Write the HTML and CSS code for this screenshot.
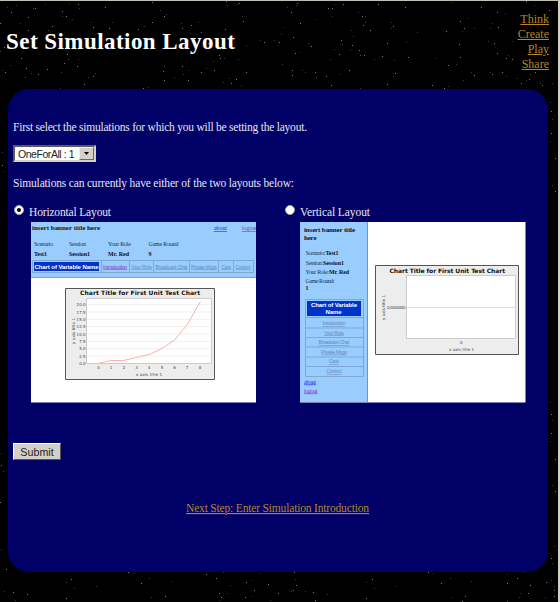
FILE: index.html
```html
<!DOCTYPE html>
<html lang="en">
<head>
<meta charset="utf-8">
<title>Set Simulation Layout</title>
<link rel="stylesheet" href="styles.css">
</head>
<body>
<svg class="stars" width="557" height="602" viewBox="0 0 557 602" shape-rendering="crispEdges" aria-hidden="true">
<path id="bright" d=""/>
<path id="dim" d=""/>
</svg>
<header class="top">
<h1><span>Set Simulation Layout</span></h1>
<nav><a href="#">Think</a><a href="#">Create</a><a href="#">Play</a><a href="#">Share</a></nav>
</header>
<main class="panel">
<p class="first"><svg class="line" width="300" height="20"><text x="0" y="14" textLength="294">First select the simulations for which you will be setting the layout.</text></svg></p>
<button class="select" type="button"><svg class="value" width="60" height="13"><text x="0" y="10.500" textLength="56.500">OneForAll : 1</text></svg><i class="drop"><svg width="5" height="3"><path d="M0 0H5L2.5 3Z"/></svg></i></button>
<p class="second"><svg class="line" width="300" height="20"><text x="0" y="14" textLength="281">Simulations can currently have either of the two layouts below:</text></svg></p>
<div class="options">
<section class="option horizontal">
<label><i class="radio checked"></i><svg class="line" width="90" height="16"><text x="0" y="12" textLength="82">Horizontal Layout</text></svg></label>
<svg class="preview" width="226" height="181" viewBox="30 222 226 181">
<path fill="#fff" d="M31 222H256V402H31Z"/><path fill="#9cf" d="M31 222H256V277H31Z"/>
<path stroke="#7aa3cc" d="M31 277.5H256" fill="none"/>
<g class="serif"><text class="b" x="32" y="230" font-size="7" textLength="68">insert banner title here</text>
<text class="blue" x="214" y="230" textLength="13">about</text><text class="purple" x="242" y="230" textLength="15">logout</text>
<text x="34" y="246" textLength="19">Scenario</text><text x="69" y="246" textLength="17">Session</text><text x="108" y="246" textLength="23">Your Role</text><text x="148.500" y="246" textLength="30">Game Round</text>
<text class="b" x="34" y="255.500" textLength="13">Test1</text><text class="b" x="69" y="255.500" textLength="21">Session1</text><text class="b" x="108" y="255.500" textLength="21">Mr. Red</text><text class="b" x="148.500" y="255.500">9</text></g>
<path class="cells" d="M32.500 260.500H253.500V272.500H32.500ZM101.500 260.500V272.500M129.500 260.500V272.500M153.500 260.500V272.500M189.500 260.500V272.500M218.500 260.500V272.500M233.500 260.500V272.500"/>
<path fill="#0033cc" d="M34 262H99V271H34Z"/>
<g class="sans"><text class="white" x="34.500" y="269" textLength="64">Chart of Variable Name</text><text class="purple" x="103" y="268.500" textLength="24">Introduction</text><g class="link"><text x="131" y="268.500" textLength="21">Your Role</text><text x="155.500" y="268.500" textLength="32">Broadcast Chat</text><text x="191" y="268.500" textLength="26">Private Msgs</text><text x="221.500" y="268.500" textLength="9.500">Cast</text><text x="235.500" y="268.500" textLength="15">Control</text></g></g>
<path class="frame" d="M65.500 288.500H214.500V379.500H65.500Z"/><path class="plot" d="M86.500 298.500H211.500V363.500H86.500Z"/>
<path stroke="#f1f1f1" d="M87 304.500H211M87 312H211M87 319.500H211M87 326.500H211M87 334H211M87 341.500H211M87 348.500H211M87 356H211" fill="none"/>
<path class="curve" d="M98 363.500L111 360.500H123.500L136 357.500L149 354.500L162 348.500L174.500 340L187 325L200.500 301.500"/>
<g class="chart"><text class="title" x="80" y="295" textLength="120">Chart Title for First Unit Test Chart</text>
<g text-anchor="end"><text x="85.500" y="306">20.0</text><text x="85.500" y="313.500">17.5</text><text x="85.500" y="321">15.0</text><text x="85.500" y="328.200">12.5</text><text x="85.500" y="335.500">10.0</text><text x="85.500" y="343">7.5</text><text x="85.500" y="350.300">5.0</text><text x="85.500" y="357.700">2.5</text><text x="85.500" y="365">0.0</text></g>
<g text-anchor="middle"><text x="98.500" y="368.500">0</text><text x="111" y="368.500">1</text><text x="124" y="368.500">2</text><text x="136.500" y="368.500">3</text><text x="149" y="368.500">4</text><text x="162" y="368.500">5</text><text x="174.500" y="368.500">6</text><text x="187" y="368.500">7</text><text x="200" y="368.500">8</text></g>
<text x="136" y="376" textLength="26">x axis title 1</text><text transform="translate(75 344) rotate(-90)" textLength="26">y axis title 1</text></g>
<path stroke="#8080b4" d="M31 402.500H256" fill="none"/>
</svg>
</section>
<section class="option vertical">
<label><i class="radio"></i><svg class="line" width="90" height="16"><text x="0" y="12" textLength="70">Vertical Layout</text></svg></label>
<svg class="preview" width="226" height="181" viewBox="300 222 226 181">
<path fill="#fff" d="M300 222H525.500V402H300Z"/><path fill="#9cf" d="M300 222H367.500V402H300Z"/>
<path stroke="#888f99" fill="none" d="M367.500 222V402"/>
<g class="serif"><text class="b" x="304" y="231.500" font-size="7" textLength="51">insert banner title</text><text class="b" x="304" y="239.500" font-size="7" textLength="12.500">here</text>
<text x="305.500" y="255" textLength="20">Scenario:</text><text class="b" x="325.500" y="255" textLength="13">Test1</text><text x="305.500" y="264.500" textLength="17.500">Session:</text><text class="b" x="323" y="264.500" textLength="21">Session1</text><text x="305.500" y="273.700" textLength="23.500">Your Role:</text><text class="b" x="329" y="273.700" textLength="20">Mr. Red</text><text x="305.500" y="283" textLength="29">Game Round:</text><text class="b" x="305.500" y="290">1</text>
<text class="blue" x="304" y="383.500" textLength="12">about</text><text class="purple" x="304" y="392.500" textLength="13.500">logout</text></g>
<path class="cells" d="M305.500 299.500H363.500V376.500H305.500ZM305.500 317.500H363.500M305.500 328H363.500M305.500 337.500H363.500M305.500 347H363.500M305.500 357H363.500M305.500 366.500H363.500"/>
<path fill="#0033cc" d="M307 301H361V316H307Z"/>
<g class="sans" text-anchor="middle"><text class="white" x="334" y="307" textLength="46">Chart of Variable</text><text class="white" x="333.500" y="314" textLength="16">Name</text><g class="link"><text x="334" y="325" textLength="23">Introduction</text><text x="334" y="334.500" textLength="20">Your Role</text><text x="334" y="344" textLength="31">Broadcast Chat</text><text x="334" y="353.700" textLength="26">Private Msgs</text><text x="334" y="363.300" textLength="10">Cast</text><text x="334" y="373" textLength="15">Control</text></g></g>
<path class="frame" d="M375.500 265.500H518.500V354.500H375.500Z"/><path class="plot" d="M406.500 275.500H515.500V338.500H406.500Z"/><path stroke="#ddd" d="M407 307.500H515"/>
<g class="chart"><text class="title" x="389.500" y="272.500" textLength="115.500">Chart Title for First Unit Test Chart</text><text x="387" y="309" textLength="18.500">0.0000000</text><text x="460" y="343.500">0</text><text x="449" y="350.500" textLength="25">x axis title 1</text><text transform="translate(384.500 320) rotate(-90)" textLength="25">y axis title 1</text></g>
<path stroke="#8080b4" d="M300 402.500H525.500" fill="none"/>
</svg>
</section>
</div>
<button class="submit" type="button">Submit</button>
<a class="next" href="#"><svg class="line" width="184" height="18"><text x="0" y="13" textLength="183">Next Step: Enter Simulation Introduction</text></svg></a>
</main>
<script src="stars.js"></script>
</body>
</html>
```
FILE: styles.css
```css
* { box-sizing: border-box; }
body { margin: 0; width: 560px; height: 602px; overflow: hidden; background: #000; border-top: 1px solid #c1beb6; border-right: 2px solid #d4d0c8; font-family: "Liberation Serif", serif; font-size: 12px; position: relative; }
.stars { position: absolute; left: 0; top: -1px; }
#bright { fill: #777; }
#dim { fill: #3c3c3c; }
.top { position: relative; display: flex; justify-content: space-between; height: 88px; padding: 11px 9px 0 6px; }
h1 { margin: 17px 0 0; color: #fff; font-size: 23px; line-height: 26px; letter-spacing: .45px; white-space: nowrap; }
nav { display: flex; flex-direction: column; align-items: flex-end; }
nav a { color: #b98426; font-size: 12px; line-height: 15px; }
.panel { position: relative; display: flex; flex-direction: column; align-items: flex-start; width: 540px; height: 483px; margin-left: 8px; padding: 28px 0 0 5px; background: #006; border-radius: 21px; color: #e4e4f4; }
p { margin: 0; height: 20px; }
.line { display: block; overflow: visible; fill: currentColor; font-size: 11.5px; }
.select { display: flex; width: 83px; height: 17px; margin-top: 8px; padding: 0 0 0 3px; border: 2px solid; border-color: #5d5b57 #d4d0c8 #d4d0c8 #5d5b57; background: #fff; align-items: stretch; justify-content: space-between; }
.value { display: block; flex: none; font: 10.5px "Liberation Sans", sans-serif; fill: #222; }
.drop { display: flex; align-items: center; justify-content: center; width: 15px; background: #d4d0c8; border: 1px solid; border-color: #eee #666 #666 #eee; }
.second { margin-top: 11px; }
.options { display: flex; margin-top: 11px; }
.option { width: 271px; }
.option label { display: flex; height: 18px; align-items: flex-start; gap: 5px; padding-left: 1px; }
.radio { width: 10px; height: 10px; border-radius: 50%; background: #fff; border: 1px solid #aaa; display: flex; margin-top: 1px; }
.checked::after { content: ""; width: 4px; height: 4px; margin: 2px; border-radius: 50%; background: #000; }
.preview { display: block; margin-left: 17px; }
.vertical .preview { margin-left: 16px; }
.serif { font-family: "Liberation Serif", serif; font-size: 6px; fill: #234; }
.sans { font-family: "Liberation Sans", sans-serif; font-size: 5px; }
.b { font-weight: bold; fill: #112; }
.blue { fill: #22f; text-decoration: underline; }
.purple { fill: #83b; text-decoration: underline; }
.white { fill: #fff; font-size: 6px; font-weight: bold; }
.link { fill: #668ab5; text-decoration: underline; }
.cells { fill: none; stroke: #7fa9d4; }
.frame { fill: #ededed; stroke: #555; }
.plot { fill: #fff; stroke: #ccc; }
.curve { fill: none; stroke: #ffb0b0; }
.chart { font-family: "DejaVu Sans", sans-serif; font-size: 4px; fill: #444; }
.title { font-size: 6px; font-weight: bold; fill: #111; }
.submit { width: 48px; height: 17px; margin-top: 40px; padding: 0; border: 1px solid; border-color: #fff #555 #555 #fff; background: #d4d0c8; font: 10.7px/14px "Liberation Sans", sans-serif; color: #222; }
.next { align-self: center; margin: 39px 5px 0 0; color: #b98426; }
.next text, nav a { text-decoration: underline; }
```
FILE: stars.js
```js
// Star coordinates in thirds of a pixel, per region of the sky: left, top, points.
const sky = [
  [0, 0, '22,23 35,38 48,15 84,52 100,26 107,25 137,14 186,35 188,50 200,50 208,10 235,12 238,26 316,23 337,66 327,85 275,66 279,82 217,57 158,79 145,91 85,92 61,70 2,70 2,155 13,141 30,112 111,112 66,157 63,175 32,196 15,217 8,211 78,206 93,221 116,223 75,233 141,208 183,216 192,190 206,177 203,164 236,178 231,200 286,220 280,230 266,233 254,254 181,264 431,264 445,262 492,240 524,231 490,214 494,199 548,199 565,210 605,216 618,206 643,211 640,184 661,175 673,175 658,165 716,178 739,218 689,234 709,237 669,247 693,250 723,257 565,240 549,224 457,7 481,32 493,50 500,44 456,66 432,78 416,89 489,100 547,86 543,71 573,76 596,66 605,97 570,101 626,130 683,17 679,4 711,14 717,11 728,48 731,64 781,122 792,127 824,122 838,127 740,135 675,89 7,457 6,496 10,514'],
  [280, 0, '22,23 35,38 48,15 52,11 12,82 61,70 5,102 41,111 85,130 93,140 61,157 47,160 6,192 37,212 68,212 37,226 77,217 106,217 109,232 138,230 106,57 146,25 156,50 157,25 162,14 191,12 235,38 247,50 257,50 295,14 255,68 249,76 214,91 271,91 221,108 185,120 186,132 217,136 163,149 178,163 210,152 237,152 240,165 254,165 282,177 306,170 150,178 208,211 178,222 154,255 241,264 321,254 340,229 345,220 342,181 386,172 379,127 321,131 334,67 340,79 334,85 376,23 412,97 498,95 465,174 541,171 529,194 505,197 575,218 582,227 549,240 457,255 505,259 492,264 518,7 604,21 563,55 541,65 583,86 553,86 546,93 538,133 637,71 656,81 630,85 653,37 676,41 643,131 625,124 652,159 697,123 680,174 686,166 698,178 630,216 638,222 678,230 666,218 713,236 724,250 739,240 748,239 750,224 765,217 782,249 787,257 818,250 739,4 762,16 807,32 811,307 813,335 818,358 814,400 811,424 826,475 818,555 825,573'],
  [0, 400, '5,159 5,197 10,214 1,307 3,447 19,508 14,575 39,577 46,602 82,584 200,546 214,538 223,564 199,595 289,559 385,517 400,520 411,514 449,535 424,550 454,593 496,589 514,544 619,523 670,517 649,535 690,555 659,580 682,580 663,593 658,602 737,592 756,589 739,546 753,541 763,571 780,520 805,553 811,602 835,580'],
  [280, 400, '811,7 814,43 818,60 814,100 811,124 826,177 818,256 825,274 823,440 814,475 818,490 43,517 46,537 48,555 34,573 41,571 75,575 100,577 142,584 106,602 260,546 276,537 284,564 260,595 349,559 446,517 460,520 474,514 510,535 485,550 514,593 557,589 574,544 546,603 681,523 711,535 730,517 751,555 720,580 744,580 718,593 683,550 683,603 800,546 814,541 823,571 823,559 823,589 797,592']
];
let bright = '';
let dim = '';
sky.forEach(([left, top, points]) => {
  points.split(' ').forEach((point, i) => {
    const [x, y] = point.split(',').map(n => Math.floor(n / 3));
    const pixel = `M${x + left} ${y + top}h1v1h-1z`;
    if (i % 2) bright += pixel; else dim += pixel;
  });
});
document.getElementById('bright').setAttribute('d', bright);
document.getElementById('dim').setAttribute('d', dim);
```
